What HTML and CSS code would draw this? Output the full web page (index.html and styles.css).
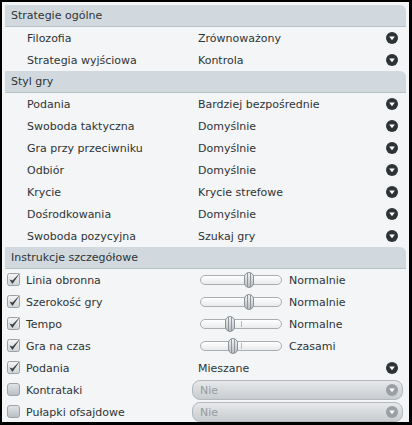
FILE: index.html
```html
<!DOCTYPE html>
<html lang="pl">
<head>
<meta charset="utf-8">
<title>Taktyka</title>
<link rel="stylesheet" href="styles.css">
</head>
<body>
<svg width="0" height="0" class="defs">
  <defs>
    <symbol id="dd" viewBox="0 0 12 12">
      <circle cx="6" cy="6" r="6" fill="currentColor"/>
      <path d="M3.2 4.6 H8.8 L6 8.2 Z" fill="#fff"/>
    </symbol>
    <symbol id="chk" viewBox="0 0 14 14">
      <rect x="0.5" y="1.5" width="12" height="12" rx="2" fill="url(#boxg)" stroke="#9aa0a5"/>
      <path d="M2.4 7.4 L5.4 12 L13.2 0.8 L5.5 8.6 Z" fill="#3a3f44"/>
    </symbol>
    <symbol id="unchk" viewBox="0 0 14 14">
      <rect x="0.5" y="1.5" width="12" height="12" rx="2.5" fill="url(#boxu)" stroke="#9ea4a9"/>
    </symbol>
    <linearGradient id="boxg" x1="0" y1="0" x2="0" y2="1">
      <stop offset="0" stop-color="#f4f5f6"/>
      <stop offset="1" stop-color="#cfd3d6"/>
    </linearGradient>
    <linearGradient id="boxu" x1="0" y1="0" x2="0" y2="1">
      <stop offset="0" stop-color="#e2e5e8"/>
      <stop offset="1" stop-color="#b9bec3"/>
    </linearGradient>
  </defs>
</svg>
<div class="window">
  <section class="group">
    <div class="group-head">Strategie ogólne</div>
    <div class="row"><span class="label">Filozofia</span><span class="value">Zrównoważony</span><svg class="dd"><use href="#dd"/></svg></div>
    <div class="row"><span class="label">Strategia wyjściowa</span><span class="value">Kontrola</span><svg class="dd"><use href="#dd"/></svg></div>
  </section>
  <section class="group">
    <div class="group-head">Styl gry</div>
    <div class="row"><span class="label">Podania</span><span class="value">Bardziej bezpośrednie</span><svg class="dd"><use href="#dd"/></svg></div>
    <div class="row"><span class="label">Swoboda taktyczna</span><span class="value">Domyślnie</span><svg class="dd"><use href="#dd"/></svg></div>
    <div class="row"><span class="label">Gra przy przeciwniku</span><span class="value">Domyślnie</span><svg class="dd"><use href="#dd"/></svg></div>
    <div class="row"><span class="label">Odbiór</span><span class="value">Domyślnie</span><svg class="dd"><use href="#dd"/></svg></div>
    <div class="row"><span class="label">Krycie</span><span class="value">Krycie strefowe</span><svg class="dd"><use href="#dd"/></svg></div>
    <div class="row"><span class="label">Dośrodkowania</span><span class="value">Domyślnie</span><svg class="dd"><use href="#dd"/></svg></div>
    <div class="row"><span class="label">Swoboda pozycyjna</span><span class="value">Szukaj gry</span><svg class="dd"><use href="#dd"/></svg></div>
  </section>
  <section class="group">
    <div class="group-head">Instrukcje szczegółowe</div>
    <div class="row"><span class="label check"><svg class="box"><use href="#chk"/></svg>Linia obronna</span>
      <span class="slider-cell"><span class="track"><span class="thumb" style="left:43px"></span></span><span class="slider-text">Normalnie</span></span></div>
    <div class="row"><span class="label check"><svg class="box"><use href="#chk"/></svg>Szerokość gry</span>
      <span class="slider-cell"><span class="track"><span class="thumb" style="left:43px"></span></span><span class="slider-text">Normalnie</span></span></div>
    <div class="row"><span class="label check"><svg class="box"><use href="#chk"/></svg>Tempo</span>
      <span class="slider-cell"><span class="track"><span class="tick"></span><span class="thumb" style="left:24px"></span></span><span class="slider-text">Normalne</span></span></div>
    <div class="row"><span class="label check"><svg class="box"><use href="#chk"/></svg>Gra na czas</span>
      <span class="slider-cell"><span class="track"><span class="tick"></span><span class="thumb" style="left:27px"></span></span><span class="slider-text">Czasami</span></span></div>
    <div class="row"><span class="label check"><svg class="box"><use href="#chk"/></svg>Podania</span><span class="value">Mieszane</span><svg class="dd"><use href="#dd"/></svg></div>
    <div class="row"><span class="label check"><svg class="box"><use href="#unchk"/></svg>Kontrataki</span>
      <span class="combo"><span>Nie</span><svg class="dd dis"><use href="#dd"/></svg></span></div>
    <div class="row"><span class="label check"><svg class="box"><use href="#unchk"/></svg>Pułapki ofsajdowe</span>
      <span class="combo"><span>Nie</span><svg class="dd dis"><use href="#dd"/></svg></span></div>
  </section>
</div>
</body>
</html>
```

FILE: styles.css
```css
html, body {
  margin: 0;
  padding: 0;
  background: #000;
}
.defs {
  position: absolute;
  width: 0;
  height: 0;
}
.window {
  width: 407px;
  height: 420px;
  margin: 2px 0 0 2px;
  padding: 3px 3px 0 3px;
  box-sizing: border-box;
  background: #f4f5f6;
  overflow: hidden;
  font-family: "DejaVu Sans", sans-serif;
  font-size: 11px;
  color: #2e3436;
}
.group-head {
  height: 22px;
  box-sizing: border-box;
  line-height: 21px;
  padding-left: 6px;
  background: #d1d9df;
  border-bottom: 1px solid #b8c2c9;
  border-top-right-radius: 6px;
  color: #2e3436;
}
.row {
  display: grid;
  grid-template-columns: 193px 1fr 12px;
  align-items: center;
  height: 22px;
  padding-right: 8px;
}
.label {
  padding-left: 22px;
  white-space: nowrap;
}
.label.check {
  padding-left: 2px;
  display: flex;
  align-items: center;
  gap: 5px;
}
.box {
  width: 14px;
  height: 14px;
  margin-top: -2px;
}
.value {
  white-space: nowrap;
}
.dd {
  width: 12px;
  height: 12px;
  color: #2e3436;
  display: block;
}
.dd.dis {
  color: #9a9fa3;
}
.slider-cell {
  grid-column: 2 / 4;
  display: flex;
  align-items: center;
  padding-left: 2px;
}
.track {
  position: relative;
  width: 82px;
  height: 10px;
  box-sizing: border-box;
  border: 1px solid #a9aeb3;
  border-radius: 5px;
  background: linear-gradient(#ffffff, #e9ebed);
}
.tick {
  position: absolute;
  left: 40px;
  top: 1px;
  width: 1px;
  height: 6px;
  background: #b4b9bd;
}
.thumb {
  position: absolute;
  top: -4px;
  width: 10px;
  height: 16px;
  box-sizing: border-box;
  border: 1px solid #8b9196;
  border-radius: 5px;
  background:
    linear-gradient(90deg, transparent 2px, #8f959a 2px, #8f959a 3px, transparent 3px, transparent 5px, #8f959a 5px, #8f959a 6px, transparent 6px),
    linear-gradient(#f2f3f4, #b9bec2);
}
.slider-text {
  margin-left: 7px;
  white-space: nowrap;
}
.combo {
  grid-column: 2 / 4;
  margin-left: -6px;
  margin-right: -5px;
  height: 20px;
  box-sizing: border-box;
  border: 1px solid #b3b8bc;
  border-radius: 8px;
  background: linear-gradient(#e6e8ea, #c8ccd0);
  display: flex;
  align-items: center;
  justify-content: space-between;
  padding: 0 4px 0 7px;
  color: #979b9f;
}
```
